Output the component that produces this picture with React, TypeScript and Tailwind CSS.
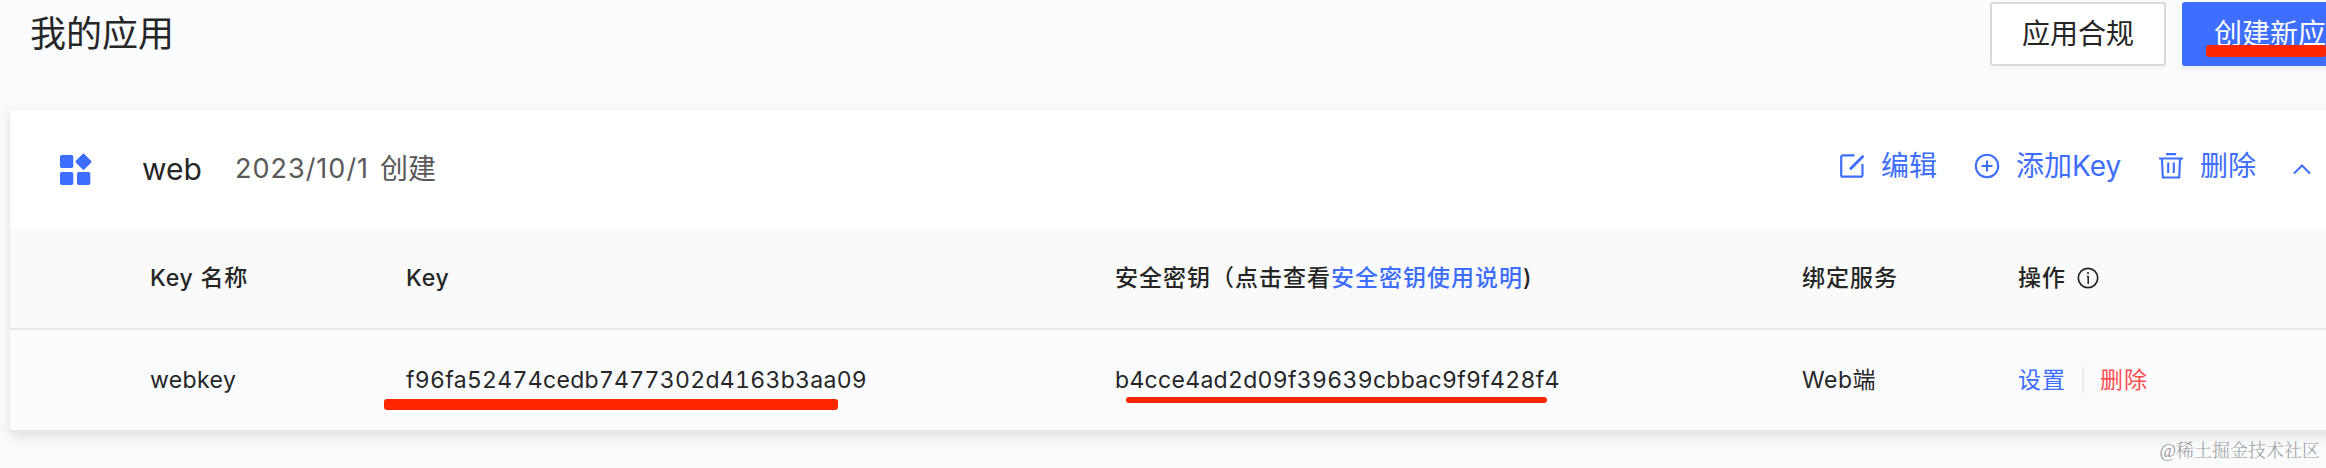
import type { ReactNode } from "react";

function AppIcon() {
  return (
    <svg className="h-[33px] w-[33px]" viewBox="0 0 33 33" fill="#3d6eff">
      <rect x="0" y="2" width="13.3" height="13" rx="1.8" />
      <rect x="0" y="19" width="13.3" height="13" rx="1.8" />
      <rect x="17" y="19" width="13.3" height="13" rx="1.8" />
      <rect x="17.4" y="2.6" width="12.2" height="12.2" rx="1.5" transform="rotate(45 23.5 8.7)" />
    </svg>
  );
}

function EditIcon() {
  return (
    <svg className="h-6 w-6" viewBox="0 0 24 24" fill="none" stroke="#3d6eff" strokeWidth="2.2">
      <path d="M14.5 1.3H3a1.800 1.800 0 0 0-1.800 1.800V20.900a1.800 1.800 0 0 0 1.800 1.800H20.700a1.800 1.800 0 0 0 1.800-1.800V10" />
      <path d="M10 15.200L23.500 1.700" strokeWidth="2.800" />
    </svg>
  );
}

function PlusCircleIcon() {
  return (
    <svg className="h-[26px] w-[26px]" viewBox="0 0 26 26" fill="none" stroke="#3d6eff" strokeWidth="2.1">
      <circle cx="13" cy="13" r="11.200" />
      <path d="M13 7.500v11M7.500 13h11" />
    </svg>
  );
}

function TrashIcon() {
  return (
    <svg className="h-[26px] w-6" viewBox="0 0 24 26" fill="none" stroke="#3d6eff" strokeWidth="2.1">
      <path d="M7 1.100h10M0 5.500h24M3 6l.8 18.500h16.400L21 6M9.200 9.500v10.500M14.800 9.500v10.500" />
    </svg>
  );
}

function InfoIcon() {
  return (
    <svg className="h-[22px] w-[22px]" viewBox="0 0 22 22" fill="none" stroke="#262626" strokeWidth="1.700">
      <circle cx="11" cy="11" r="9.700" />
      <path d="M9.800 9.500H11.200V17" strokeWidth="1.500" />
      <circle cx="11" cy="6" r="1.100" fill="#262626" stroke="none" />
    </svg>
  );
}

function Cell({ className, children }: { className: string; children: ReactNode }) {
  return <div className={`flex shrink-0 items-center whitespace-nowrap ${className}`}>{children}</div>;
}

export default function App() {
  return (
    <div className="relative h-[468px] w-[2326px] overflow-hidden bg-[#fafbfd] font-['Inter','Noto_Sans_CJK_SC',sans-serif] text-[#262626]">
      <header className="flex h-[110px] items-start pt-0.5 whitespace-nowrap">
        <h1 className="ml-[30px] h-16 w-[1960px] shrink-0 text-[36px] leading-[64px]">我的应用</h1>
        <button className="h-16 w-[176px] shrink-0 rounded-[3px] border-2 border-[#d9d9d9] bg-white text-[28px] leading-[60px] shadow-[0_4px_0_rgba(0,0,0,0.02)]">
          应用合规
        </button>
        <button className="relative ml-4 h-16 w-[204px] shrink-0 rounded-[3px] bg-[#3d6eff] pl-8 text-left text-[28px] leading-[64px] text-white shadow-[0_4px_0_rgba(0,0,0,0.045)]">
          创建新应用
          <span className="absolute top-[43px] left-6 h-3 w-[120px] rounded-[3px] bg-[#ff2600]" />
        </button>
      </header>

      <main className="ml-[10px] h-[322px] w-[2340px] bg-white shadow-[0_4px_12px_rgba(0,0,0,0.12)]">
        <section className="flex h-[118px] items-center whitespace-nowrap">
          <div className="ml-[50px] flex w-[82px] shrink-0">
            <AppIcon />
          </div>
          <div className="w-[93px] shrink-0 text-[30px]">web</div>
          <div className="flex w-[1605px] shrink-0 items-center text-[27px] text-[#595959]">
            <span className="mr-[11px] tracking-[1px]">2023/10/1</span>
            <span className="text-[28px]">创建</span>
          </div>
          <div className="flex items-center pb-1.5 text-[28px] text-[#3d6eff]">
            <div className="flex w-[134px] items-center gap-[17px]"><EditIcon />编辑</div>
            <div className="flex w-[185px] items-center gap-4"><PlusCircleIcon />添加Key</div>
            <div className="flex w-[134px] items-center gap-[17px]"><TrashIcon />删除</div>
            <svg className="mt-1.5 h-3 w-[18px]" viewBox="0 0 18 12" fill="none" stroke="#3d6eff" strokeWidth="2">
              <path d="M1 10.500L9 2.500l8 8" />
            </svg>
          </div>
        </section>

        <section className="flex h-[102px] items-center border-b-2 border-[#e8e8e8] bg-[#fafafa] pl-[140px] text-[23px] font-medium tracking-[0.8px]">
          <Cell className="w-[256px]">Key 名称</Cell>
          <Cell className="w-[709px]">Key</Cell>
          <Cell className="w-[687px] tracking-[1px]">安全密钥（点击查看<span className="text-[#3d6eff]">安全密钥使用说明</span>)</Cell>
          <Cell className="w-[216px] tracking-[1px]">绑定服务</Cell>
          <Cell className="gap-[11px] tracking-[1px]">操作<InfoIcon /></Cell>
        </section>

        <section className="flex h-[102px] items-center border-b-2 border-[#e6e7e9] bg-[#fafbfd] pl-[140px] text-[23px] tabular-nums">
          <Cell className="w-[256px] tracking-[0.4px]">webkey</Cell>
          <Cell className="relative w-[709px] tracking-[0.3px]">
            f96fa52474cedb7477302d4163b3aa09
            <span className="absolute top-[36px] -left-[22px] h-[11px] w-[454px] rounded-[3px] bg-[#ff2600]" />
          </Cell>
          <Cell className="relative w-[687px] tracking-[0.3px]">
            b4cce4ad2d09f39639cbbac9f9f428f4
            <span className="absolute top-[34px] left-[11px] h-1.5 w-[421px] rounded-[3px] bg-[#ff2600]" />
          </Cell>
          <Cell className="w-[216px] tracking-[0.5px]">Web端</Cell>
          <Cell className="tracking-[1px]">
            <span className="text-[#3d6eff]">设置</span>
            <span className="mx-4 h-[26px] w-0.5 bg-[#e8e8e8]" />
            <span className="text-[#ff4d4f]">删除</span>
          </Cell>
        </section>
      </main>

      <div className="absolute top-[439px] right-[6px] font-['Liberation_Serif','Noto_Serif_CJK_SC','Noto_Sans_CJK_SC',serif] text-[18px] leading-6 font-light whitespace-nowrap text-[#9c9d9f]">
        @稀土掘金技术社区
      </div>
    </div>
  );
}
